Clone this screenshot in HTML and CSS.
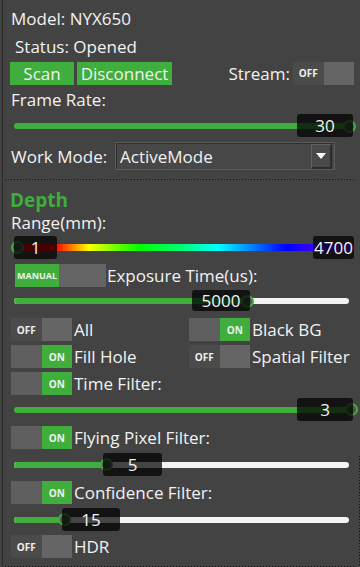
FILE: index.html
```html
<!DOCTYPE html>
<html>
<head>
<meta charset="utf-8">
<link rel="stylesheet" href="styles.css">
</head>
<body>
<div class="panel">
  <div class="row model">Model: NYX650</div>
  <div class="row status">Status: Opened</div>
  <div class="row buttons">
    <button class="btn btn-scan">Scan</button>
    <button class="btn btn-disc">Disconnect</button>
    <span class="stream-label">Stream:</span>
    <span class="toggle off"><span class="t-a">OFF</span><span class="t-b"></span></span>
  </div>
  <div class="row label fr-label">Frame Rate:</div>
  <div class="slider s-fr">
    <div class="track"><div class="fill" style="width:100%"></div></div>
    <span class="knob" style="left:340px"></span>
    <span class="bubble" style="left:294px;width:56px">30</span>
  </div>
  <div class="row workmode">
    <span class="wm-label">Work Mode:</span>
    <div class="combo"><span class="combo-text">ActiveMode</span><span class="combo-btn"><span class="tri"></span></span></div>
  </div>
  <div class="sep"></div>
  <div class="row depth">Depth</div>
  <div class="row label range-label">Range(mm):</div>
  <div class="slider s-range">
    <div class="track rainbow"></div>
    <span class="knob" style="left:8px"></span>
    <span class="bubble" style="left:11px;width:43px">1</span>
    <span class="bubble" style="left:310px;width:41px">4700</span>
  </div>
  <div class="row manual-row">
    <span class="toggle manual"><span class="t-a">MANUAL</span><span class="t-b"></span></span>
    <span class="tl">Exposure Time(us):</span>
  </div>
  <div class="slider s-exp">
    <div class="track white"><div class="fill" style="width:234px"></div></div>
    <span class="knob" style="left:238px"></span>
    <span class="bubble" style="left:189px;width:58px">5000</span>
  </div>
  <div class="grid">
    <div class="titem"><span class="toggle off"><span class="t-a">OFF</span><span class="t-b"></span></span><span class="tl">All</span></div>
    <div class="titem"><span class="toggle on"><span class="t-b"></span><span class="t-a">ON</span></span><span class="tl">Black BG</span></div>
    <div class="titem"><span class="toggle on"><span class="t-b"></span><span class="t-a">ON</span></span><span class="tl">Fill Hole</span></div>
    <div class="titem"><span class="toggle off"><span class="t-a">OFF</span><span class="t-b"></span></span><span class="tl">Spatial Filter</span></div>
    <div class="titem"><span class="toggle on"><span class="t-b"></span><span class="t-a">ON</span></span><span class="tl">Time Filter:</span></div>
  </div>
  <div class="slider s-time">
    <div class="track"><div class="fill" style="width:100%"></div></div>
    <span class="knob" style="left:342px"></span>
    <span class="bubble" style="left:294px;width:56px">3</span>
  </div>
  <div class="row titem single"><span class="toggle on"><span class="t-b"></span><span class="t-a">ON</span></span><span class="tl">Flying Pixel Filter:</span></div>
  <div class="slider s-fly">
    <div class="track white"><div class="fill" style="width:93px"></div></div>
    <span class="knob" style="left:97px"></span>
    <span class="bubble" style="left:100px;width:59px">5</span>
  </div>
  <div class="row titem single"><span class="toggle on"><span class="t-b"></span><span class="t-a">ON</span></span><span class="tl">Confidence Filter:</span></div>
  <div class="slider s-conf">
    <div class="track white"><div class="fill" style="width:51px"></div></div>
    <span class="knob" style="left:55px"></span>
    <span class="bubble" style="left:59px;width:58px">15</span>
  </div>
  <div class="row titem single"><span class="toggle off"><span class="t-a">OFF</span><span class="t-b"></span></span><span class="tl">HDR</span></div>
  <div class="sep bottom"></div>
  <span class="focus-edge"></span>
</div>
</body>
</html>
```

FILE: styles.css
```css
html, body {
  margin: 0;
  padding: 0;
  background: #434343;
}
.panel {
  position: relative;
  height: 567px;
  box-sizing: border-box;
  border-left: 1px solid #2b2b2b;
  margin-left: 2px;
  width: 358px;
  background: #434343;
  color: #f2f2f2;
  font-family: "Open Sans", "Noto Sans", sans-serif;
  font-size: 17px;
  overflow: hidden;
}
.row {
  display: flex;
  align-items: center;
  white-space: nowrap;
}
.model { height: 22px; margin-top: 7px; padding-left: 8px; }
.status { height: 22px; margin-top: 6px; padding-left: 12px; }
.buttons { height: 24px; margin-top: 4px; padding-left: 7px; }
.btn {
  height: 23px;
  border: none;
  background: #3fae3c;
  color: #f2f2f2;
  font-family: inherit;
  font-size: 17px;
  padding: 0;
  display: flex;
  align-items: center;
  justify-content: center;
}
.btn-scan { width: 64px; }
.btn-disc { width: 95px; margin-left: 3px; }
.stream-label { margin-left: auto; margin-right: 3px; }
.buttons .toggle { margin-right: 6px; }

.label { height: 22px; padding-left: 8px; }
.fr-label { margin-top: 3px; }

.slider {
  position: relative;
  height: 24px;
  display: flex;
  align-items: center;
}
.track {
  height: 6px;
  border-radius: 3px;
  margin-left: 11px;
  width: 338px;
  background: #3fae3c;
  position: relative;
  overflow: hidden;
}
.track.white { background: #f3f3f3; width: 335px; }
.fill { height: 100%; background: #3fae3c; border-radius: 3px; }
.track.rainbow {
  height: 7px;
  width: 340px;
  border-radius: 3px;
  background: linear-gradient(to right, #ff0000 0%, #ff0000 12%, #ff8000 17%, #ffff00 22%, #80ff00 29%, #00ff00 37%, #00ff80 50%, #00ffff 60%, #0080ff 70%, #0000ff 80%, #4000ff 89%, #8000ff 100%);
}
.knob {
  position: absolute;
  top: 50%;
  width: 9px;
  height: 9px;
  margin-top: -6.5px;
  border: 2px solid #3fae3c;
  border-radius: 50%;
  background: #505050;
}
.bubble {
  position: absolute;
  top: 0;
  height: 23px;
  background: rgba(0, 0, 0, 0.72);
  border-radius: 3px;
  display: flex;
  align-items: center;
  justify-content: center;
  font-size: 17px;
  color: #f4f4f4;
}
.s-fr { margin-top: 4px; }

.workmode { height: 28px; margin-top: 4px; padding-left: 8px; }
.wm-label { width: 104px; }
.combo {
  width: 218px;
  height: 26px;
  border: 1px solid #5b5b5b;
  box-shadow: inset 1px 1px 0 #303030;
  background: #474747;
  display: flex;
  align-items: center;
  box-sizing: content-box;
}
.combo-text { padding-left: 4px; flex: 1; }
.combo-btn {
  width: 18px;
  height: 22px;
  margin-right: 2px;
  background: #4a4a4a;
  border-top: 1px solid #626262;
  border-left: 1px solid #626262;
  border-right: 2px solid #2c2c2c;
  border-bottom: 2px solid #2c2c2c;
  display: flex;
  align-items: center;
  justify-content: center;
}
.tri {
  width: 0;
  height: 0;
  border-left: 5px solid transparent;
  border-right: 5px solid transparent;
  border-top: 6px solid #ffffff;
}

.sep {
  height: 1px;
  margin-top: 9px;
  margin-left: 2px;
  margin-right: 4px;
  background: repeating-linear-gradient(to right, #111 0 1px, transparent 1px 3px);
}
.depth {
  height: 20px;
  margin-top: 10px;
  padding-left: 7px;
  color: #3fae3c;
  font-weight: bold;
  font-size: 19px;
}
.range-label { height: 20px; margin-top: 2px; }
.s-range { height: 23px; margin-top: 4px; }

.toggle {
  display: inline-flex;
  width: 61px;
  height: 23px;
  flex: none;
  font-family: "Open Sans", sans-serif;
  font-weight: bold;
  font-size: 10px;
  color: #f0f0f0;
}
.toggle .t-a, .toggle .t-b {
  width: 50%;
  display: flex;
  align-items: center;
  justify-content: center;
}
.toggle.off .t-a { background: #4b4b4b; }
.toggle.off .t-b { background: #656565; }
.toggle.on .t-b { background: #5f5f5f; }
.toggle.on .t-a { background: #3fae3c; }
.toggle.manual { width: 91px; }
.toggle.manual .t-a { width: 44px; background: #3fae3c; font-size: 9px; }
.toggle.manual .t-b { width: 47px; background: #646464; }

.manual-row { height: 24px; margin-top: 4px; padding-left: 12px; }
.tl { margin-left: 2px; }
.manual-row .tl { margin-left: 1px; }

.s-exp { height: 22px; margin-top: 3px; }
.s-exp .bubble { height: 21px; }

.grid {
  display: grid;
  grid-template-columns: 178px auto;
  row-gap: 4px;
  margin-top: 6px;
  padding-left: 8px;
}
.titem {
  display: flex;
  align-items: center;
  height: 23px;
  white-space: nowrap;
}
.single { padding-left: 8px; }
.s-time { height: 23px; margin-top: 3px; }
.s-time + .titem { margin-top: 5px; }
.s-fly { height: 23px; margin-top: 4px; }
.s-fly + .titem { margin-top: 5px; }
.s-conf { height: 23px; margin-top: 4px; }
.s-conf + .titem { margin-top: 4px; }
.bottom { margin-top: 8px; }

.focus-edge {
  position: absolute;
  right: 0;
  top: 456px;
  bottom: 0;
  width: 1px;
  background: repeating-linear-gradient(to bottom, #111 0 1px, transparent 1px 3px);
}
```
